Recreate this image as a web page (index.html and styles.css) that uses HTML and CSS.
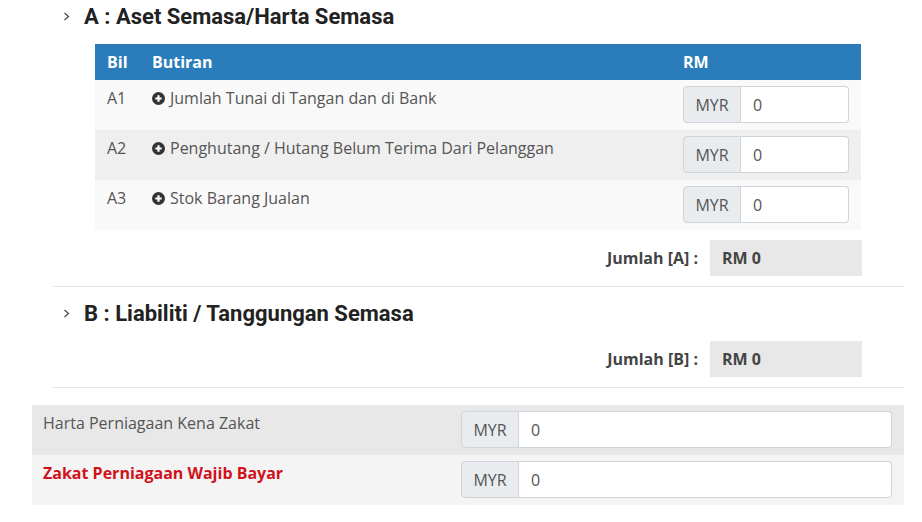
FILE: index.html
```html
<!DOCTYPE html>
<html>
<head>
<meta charset="utf-8">
<link rel="stylesheet" href="styles.css">
</head>
<body>
<div class="page">
  <section class="group group-first">
    <h3 class="group-title">
      <svg class="chev" width="7" height="9" viewBox="0 0 7 9"><path d="M1.5 1 L5.5 4.5 L1.5 8" fill="none" stroke="#444" stroke-width="1.2"/></svg>
      <span>A : Aset Semasa/Harta Semasa</span>
    </h3>
    <div class="group-body">
      <table class="items">
        <colgroup><col class="col-bil"><col><col class="col-rm"></colgroup>
        <thead>
          <tr><th class="c-bil">Bil</th><th class="c-desc">Butiran</th><th class="c-rm">RM</th></tr>
        </thead>
        <tbody>
          <tr class="odd">
            <td class="c-bil">A1</td>
            <td class="c-desc"><span class="plus"><svg width="13" height="13" viewBox="0 0 13 13"><circle cx="6.5" cy="6.5" r="6.5" fill="#333"/><path d="M6.5 3.3v6.4M3.3 6.5h6.4" stroke="#fff" stroke-width="2.2"/></svg></span>Jumlah Tunai di Tangan dan di Bank</td>
            <td class="c-rm"><div class="igroup"><span class="addon">MYR</span><span class="field">0</span></div></td>
          </tr>
          <tr class="even">
            <td class="c-bil">A2</td>
            <td class="c-desc"><span class="plus"><svg width="13" height="13" viewBox="0 0 13 13"><circle cx="6.5" cy="6.5" r="6.5" fill="#333"/><path d="M6.5 3.3v6.4M3.3 6.5h6.4" stroke="#fff" stroke-width="2.2"/></svg></span>Penghutang / Hutang Belum Terima Dari Pelanggan</td>
            <td class="c-rm"><div class="igroup"><span class="addon">MYR</span><span class="field">0</span></div></td>
          </tr>
          <tr class="odd">
            <td class="c-bil">A3</td>
            <td class="c-desc"><span class="plus"><svg width="13" height="13" viewBox="0 0 13 13"><circle cx="6.5" cy="6.5" r="6.5" fill="#333"/><path d="M6.5 3.3v6.4M3.3 6.5h6.4" stroke="#fff" stroke-width="2.2"/></svg></span>Stok Barang Jualan</td>
            <td class="c-rm"><div class="igroup"><span class="addon">MYR</span><span class="field">0</span></div></td>
          </tr>
        </tbody>
      </table>
      <div class="total">
        <span class="total-label">Jumlah [A] :</span>
        <span class="total-box">RM 0</span>
      </div>
    </div>
  </section>
  <section class="group">
    <h3 class="group-title">
      <svg class="chev" width="7" height="9" viewBox="0 0 7 9"><path d="M1.5 1 L5.5 4.5 L1.5 8" fill="none" stroke="#444" stroke-width="1.2"/></svg>
      <span>B : Liabiliti / Tanggungan Semasa</span>
    </h3>
    <div class="group-body">
      <div class="total">
        <span class="total-label">Jumlah [B] :</span>
        <span class="total-box">RM 0</span>
      </div>
    </div>
  </section>
  <div class="summary">
    <div class="sum-row sum-dark">
      <div class="sum-label">Harta Perniagaan Kena Zakat</div>
      <div class="sum-input"><div class="igroup"><span class="addon">MYR</span><span class="field">0</span></div></div>
    </div>
    <div class="sum-row sum-light">
      <div class="sum-label red">Zakat Perniagaan Wajib Bayar</div>
      <div class="sum-input"><div class="igroup"><span class="addon">MYR</span><span class="field">0</span></div></div>
    </div>
  </div>
</div>
</body>
</html>
```

FILE: styles.css
```css
* { box-sizing: border-box; }
html, body { margin: 0; padding: 0; background: #fff; }
body {
  font-family: "Open Sans", "Liberation Sans", sans-serif;
  font-size: 16px;
  color: #555;
  width: 922px;
  height: 522px;
  overflow: hidden;
}
.page {
  margin-left: 32px;
  width: 872px;
}
.group {
  margin-left: 21px;
  border-bottom: 1px solid #e6e6e6;
  padding: 14px 0 10px;
}
.group-first { padding-top: 4px; }
.group-title {
  margin: 0 0 16px 10px;
  height: 24px;
  display: flex;
  align-items: center;
  font-family: Roboto, "Liberation Sans", sans-serif;
  font-weight: 700;
  font-size: 22px;
  color: #222;
}
.chev { margin-right: 14px; margin-top: 1px; }
.group-body {
  padding-left: 42px;
  padding-right: 42px;
}
.items {
  width: 766px;
  border-collapse: collapse;
  table-layout: fixed;
}
.col-bil { width: 57px; }
.col-rm { width: 190px; }
.items th {
  background: #2b7cba;
  color: #fff;
  font-weight: 700;
  text-align: left;
  height: 36px;
  padding: 0 12px;
  font-size: 16px;
}
.items td {
  height: 50px;
  vertical-align: top;
  padding: 8px 12px 0;
  line-height: 20px;
}
.items td.c-rm { padding: 6px 12px 0; }
.items .c-desc { padding-left: 0; }
.items th.c-desc { padding-left: 0; }
.items tr.odd td { background: #f9f9f9; }
.items tr.even td { background: #efefef; }
.plus { display: inline-block; vertical-align: -1px; margin-right: 5px; line-height: 0; }
.igroup {
  display: flex;
  height: 37px;
  width: 100%;
}
.addon {
  width: 58px;
  display: flex;
  align-items: center;
  justify-content: center;
  background: #e9ecef;
  border: 1px solid #ced4da;
  border-radius: 4px 0 0 4px;
  color: #555;
  font-size: 16px;
}
.field {
  flex: 1;
  display: flex;
  align-items: center;
  padding-left: 12px;
  background: #fff;
  border: 1px solid #ced4da;
  border-left: none;
  border-radius: 0 4px 4px 0;
  color: #555;
}
.total {
  display: flex;
  justify-content: flex-end;
  align-items: center;
  margin-top: 10px;
}
.total-label {
  font-weight: 700;
  color: #444;
  margin-right: 12px;
}
.total-box {
  width: 152px;
  height: 36px;
  background: #e8e8e8;
  font-weight: 700;
  color: #444;
  padding-left: 12px;
  display: flex;
  align-items: center;
}
.summary { margin-top: 17px; }
.sum-row {
  display: flex;
  height: 50px;
}
.sum-dark { background: #e8e8e8; }
.sum-light { background: #f4f4f4; }
.sum-label {
  width: 417px;
  padding: 8px 11px 0;
  line-height: 20px;
}
.sum-label.red { color: #d0121b; font-weight: 700; }
.sum-input {
  flex: 1;
  padding: 6px 12px 0;
}
```
